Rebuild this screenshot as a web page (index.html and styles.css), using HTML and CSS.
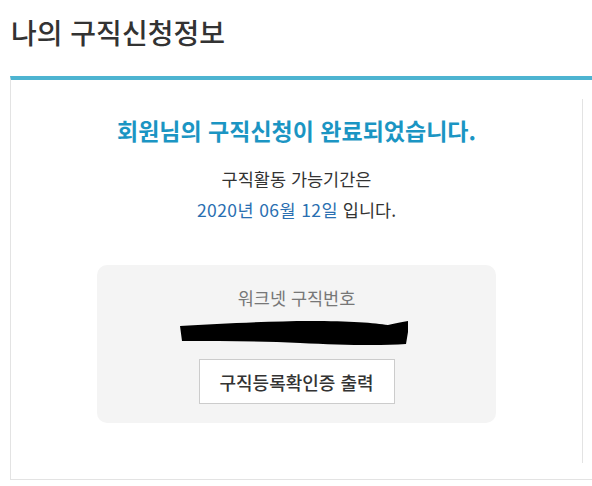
FILE: index.html
```html
<!DOCTYPE html>
<html lang="ko">
<head>
    <meta charset="UTF-8">
    <meta name="viewport" content="width=device-width, initial-scale=1.0">
    <title>나의 구직신청정보</title>
    <link rel="stylesheet" href="styles.css">
</head>
<body>
<h1 class="page-title">나의 구직신청정보</h1>

<div class="panel">
    <div class="panel-inner">
        <p class="done-msg">회원님의 구직신청이 완료되었습니다.</p>
        <p class="period">구직활동 가능기간은</p>
        <p class="period"><span class="date">2020년 06월 12일</span> 입니다.</p>

        <div class="number-box">
            <p class="number-label">워크넷 구직번호</p>
            <!-- 번호는 가림 처리 -->
            <svg class="redacted" width="230" height="26" viewBox="0 0 230 26">
                <path d="M0 6 C40 4 90 1 130 1 C170 1 195 3 208 5 C214 4 220 2 228 1 L228 12 L226 24 C200 26 160 25 120 23 C80 21 40 21 2 21 Z" fill="#000"/>
            </svg>
            <button class="print-btn">구직등록확인증 출력</button>
        </div>
    </div>
</div>
</body>
</html>
```

FILE: styles.css
```css
/* CSS styles */
body {
    font-family: "Noto Sans CJK KR", "Noto Sans", sans-serif;
    background-color: #fff;
    margin: 0;
    overflow: hidden;
    color: #333;
}
p {
    margin: 0;
}
.page-title {
    font-size: 28px;
    font-weight: 500;
    color: #333;
    margin: 0;
    padding: 12px 0 0 11px;
    line-height: 40px;
    height: 64px;
}
.panel {
    margin-left: 10px;
    width: 620px;
    border-top: 4px solid #4db4d1;
    border-left: 1px solid #e3e3e3;
    border-bottom: 1px solid #e3e3e3;
    padding: 19px 0 16px;
}
.panel-inner {
    width: 572px;
    height: 364px;
    border-right: 1px solid #e3e3e3;
    text-align: center;
    padding-top: 15px;
    box-sizing: border-box;
}
.done-msg {
    font-size: 23px;
    font-weight: 700;
    color: #1b95c3;
    line-height: 32px;
    margin-bottom: 17px;
}
.period {
    font-size: 17.5px;
    line-height: 31px;
}
.date {
    color: #2a6fb1;
    letter-spacing: 0.4px;
}
.number-box {
    width: 399px;
    height: 158px;
    margin: 40px auto 0;
    background-color: #f4f4f4;
    border-radius: 10px;
    padding-top: 18px;
    box-sizing: border-box;
}
.number-label {
    font-size: 17.5px;
    color: #777;
    line-height: 30px;
}
.redacted {
    display: block;
    margin: 7px 0 0 83px;
}
.print-btn {
    display: block;
    margin: 13px auto 0;
    width: 196px;
    height: 45px;
    background-color: #fff;
    border: 1px solid #ccc;
    font-family: inherit;
    font-size: 18px;
    font-weight: 500;
    color: #333;
    cursor: pointer;
}
```
